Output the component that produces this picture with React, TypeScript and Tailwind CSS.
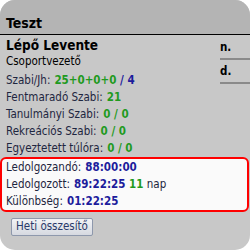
import React from "react";

const font = { fontFamily: '"DejaVu Sans Condensed", "DejaVu Sans", Tahoma, sans-serif' };

function Stat({ label, children }: { label: string; children: React.ReactNode }) {
  return (
    <div className="flex h-[17px] items-center whitespace-nowrap leading-none">
      <span className="text-[#1e2640]">{label}:</span>
      <span className="ml-[4px] font-bold">{children}</span>
    </div>
  );
}

export default function App() {
  return (
    <div className="h-[250px] w-[251px] bg-white text-[11.5px]" style={font}>
      <div className="flex h-[250px] w-[250px] flex-col overflow-hidden rounded-[15px] bg-[#c8c8c8]">
        <div className="flex h-[35px] shrink-0 items-end border-b border-black bg-[#b4b4b4] px-[6px] pb-[4px]">
          <span className="text-[14px] font-bold leading-none text-black">Teszt</span>
        </div>

        <div className="flex shrink-0">
          <div className="flex-1 pl-[6px]">
            <div className="mt-[2px] text-[13.5px] font-bold leading-[17px] text-black">Lépő Levente</div>
            <div className="leading-[14px] text-black">Csoportvezető</div>
            <div className="mt-[4px]">
              <Stat label="Szabi/Jh">
                <span className="text-[#1f9a1f]">25+0+0+0</span>
                <span className="text-[#1c1c9c]"> / 4</span>
              </Stat>
              <Stat label="Fentmaradó Szabi">
                <span className="text-[#1f9a1f]">21</span>
              </Stat>
              <Stat label="Tanulmányi Szabi">
                <span className="text-[#1f9a1f]">0 / 0</span>
              </Stat>
              <Stat label="Rekreációs Szabi">
                <span className="text-[#1f9a1f]">0 / 0</span>
              </Stat>
              <Stat label="Egyeztetett túlóra">
                <span className="text-[#1f9a1f]">0 / 0</span>
              </Stat>
            </div>
          </div>
          <div className="w-[30px] font-bold leading-none text-black">
            <div className="flex h-[25px] items-center border-b-2 border-[#8a8a8a] pt-[2px]">n.</div>
            <div className="flex h-[24px] items-center border-b-2 border-[#8a8a8a] pt-[1px]">d.</div>
          </div>
        </div>

        <div className="mr-[1px] shrink-0 rounded-[6px] border-2 border-[#ff0000] bg-[#fafafa] px-[4px]">
          <Stat label="Ledolgozandó">
            <span className="text-[#1c1c9c]">88:00:00</span>
          </Stat>
          <Stat label="Ledolgozott">
            <span className="text-[#1c1c9c]">89:22:25</span>
            <span className="text-[#1f9a1f]"> 11</span>
            <span className="font-normal text-[#1e2640]"> nap</span>
          </Stat>
          <Stat label="Különbség">
            <span className="text-[#1c1c9c]">01:22:25</span>
          </Stat>
        </div>

        <div className="mt-[6px] shrink-0 pl-[11px]">
          <button className="flex h-[18px] w-[82px] items-center justify-center rounded-[2px] border border-[#8e98ac] bg-gradient-to-b from-[#f2f3f6] to-[#d6d9e0] text-[11.5px] leading-none text-[#2a3a6a]">
            Heti összesítő
          </button>
        </div>
      </div>
    </div>
  );
}
